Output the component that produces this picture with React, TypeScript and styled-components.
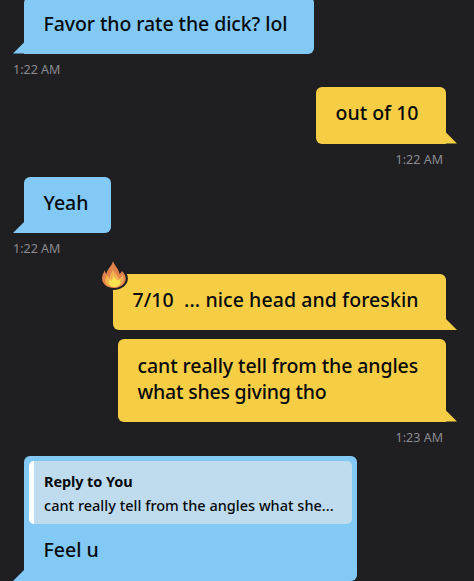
import React from 'react';
import styled, { createGlobalStyle } from 'styled-components';

type Side = 'left' | 'right';

const colors = {
  background: '#1f1f21',
  left: '#82caf5',
  right: '#f5ce46',
  quote: '#bfdcee',
  time: '#8c8b90',
  text: '#06090c',
};

const GlobalStyle = createGlobalStyle`
  * {
    box-sizing: border-box;
  }

  body {
    margin: 0;
    overflow: hidden;
    background: ${colors.background};
    font-family: 'Noto Sans', 'Open Sans', sans-serif;
  }
`;

const Chat = styled.main`
  display: flex;
  flex-direction: column;
  width: 474px;
  height: 581px;
  padding: 0 28px 0 24px;
  overflow: hidden;
`;

const Bubble = styled.div<{ $side: Side; $height: number; $top?: number }>`
  position: relative;
  display: flex;
  flex-direction: column;
  flex-shrink: 0;
  align-self: ${({ $side }) => ($side === 'left' ? 'flex-start' : 'flex-end')};
  height: ${({ $height }) => $height}px;
  margin-top: ${({ $top = 0 }) => $top}px;
  background: ${({ $side }) => colors[$side]};
  border-radius: ${({ $side }) =>
    $side === 'left' ? '6px 6px 6px 0' : '6px 6px 0 6px'};

  &::after {
    content: '';
    position: absolute;
    bottom: 0;
    ${({ $side }) => $side}: -11px;
    width: 12px;
    height: 12px;
    background: inherit;
    clip-path: ${({ $side }) =>
      $side === 'left'
        ? 'polygon(100% 0, 100% 100%, 0 100%)'
        : 'polygon(0 0, 100% 100%, 0 100%)'};
  }
`;

const Body = styled.div<{ $width: number; $top?: number }>`
  width: ${({ $width }) => $width}px;
  padding: ${({ $top = 13.2 }) => $top}px 0 0 19.5px;
`;

const Line = styled.div<{ $spacing?: number }>`
  color: ${colors.text};
  font-size: 19.5px;
  font-weight: 500;
  line-height: 26.5px;
  letter-spacing: ${({ $spacing = 0 }) => $spacing}px;
  white-space: pre;
`;

const Time = styled.time<{ $side: Side }>`
  flex-shrink: 0;
  align-self: ${({ $side }) => ($side === 'left' ? 'flex-start' : 'flex-end')};
  height: 33.5px;
  margin: ${({ $side }) => ($side === 'left' ? '0 0 0 -11px' : '0 3px 0 0')};
  padding-top: 8.3px;
  color: ${colors.time};
  font-size: 12.5px;
  line-height: 16.5px;
  white-space: pre;
`;

const Quote = styled.div`
  width: 322.5px;
  height: 63px;
  margin: 4.5px 0 0 5px;
  padding: 8px 0 0 10px;
  background: ${colors.quote};
  border-left: 5.5px solid #fff;
  border-radius: 5px;
`;

const QuoteLine = styled.div<{ $bold?: boolean; $spacing: number }>`
  color: ${colors.text};
  font-size: 14.5px;
  font-weight: ${({ $bold }) => ($bold ? 700 : 500)};
  line-height: 24px;
  letter-spacing: ${({ $spacing }) => $spacing}px;
  white-space: pre;
`;

const Reaction = styled.svg`
  position: absolute;
  top: -14px;
  left: -14px;
  width: 31px;
  height: 31px;
`;

const flame =
  'M12 0C13 4 18 8 18.5 13C20 12 20.5 11 21 10C24 13 26 17 24 21C22 25 17 27 13 27C6 27 1 23 1 17C1 14 3 11 4 9C4 11 4.5 12 5.5 13C6 8 11 5 12 0Z';

const Fire: React.FunctionComponent = () => (
  <Reaction viewBox="-2 -1 31 31" aria-label="fire">
    <path
      d={flame}
      fill={colors.background}
      stroke={colors.background}
      strokeWidth="4"
      strokeLinejoin="round"
    />
    <path d={flame} fill="#e2834c" />
    <path
      d="M12 8C12 12 17 14 18 18C20 17 21 15 22 14C23 18 23 24 15 26C8 27 4 23 4 19C4 17 5 16 6 14C7 16 8 16 9 17C9 13 11 12 12 8Z"
      fill="#f3b04f"
    />
    <path
      d="M13 15C14 18 16 18 17 20L19 18C20 23 18 26 14 26C9 26 7 23 8.5 18L11 20C11 18 12 17 13 15Z"
      fill="#f9e152"
    />
  </Reaction>
);

const App: React.FunctionComponent = () => (
  <>
    <GlobalStyle />
    <Chat>
      <Bubble $side="left" $height={56.5} $top={-3}>
        <Body $width={290} $top={13.6}>
          <Line $spacing={-0.09}>Favor tho rate the dick? lol</Line>
        </Body>
      </Bubble>
      <Time $side="left">1:22 AM</Time>

      <Bubble $side="right" $height={56.5}>
        <Body $width={130}>
          <Line>out of 10</Line>
        </Body>
      </Bubble>
      <Time $side="right">1:22 AM</Time>

      <Bubble $side="left" $height={56}>
        <Body $width={87}>
          <Line>Yeah</Line>
        </Body>
      </Bubble>
      <Time $side="left">1:22 AM</Time>

      <Bubble $side="right" $height={56.5} $top={7}>
        <Fire />
        <Body $width={333}>
          <Line $spacing={0.08}>7/10  ... nice head and foreskin</Line>
        </Body>
      </Bubble>
      <Bubble $side="right" $height={82.5} $top={9}>
        <Body $width={328} $top={13.6}>
          <Line $spacing={-0.09}>cant really tell from the angles</Line>
          <Line $spacing={-0.2}>what shes giving tho</Line>
        </Body>
      </Bubble>
      <Time $side="right">1:23 AM</Time>

      <Bubble $side="left" $height={125} $top={1}>
        <Quote>
          <QuoteLine $bold $spacing={-0.1}>
            Reply to You
          </QuoteLine>
          <QuoteLine $spacing={0.01}>
            cant really tell from the angles what she...
          </QuoteLine>
        </Quote>
        <Body $width={333}>
          <Line>Feel u</Line>
        </Body>
      </Bubble>
    </Chat>
  </>
);

export default App;
